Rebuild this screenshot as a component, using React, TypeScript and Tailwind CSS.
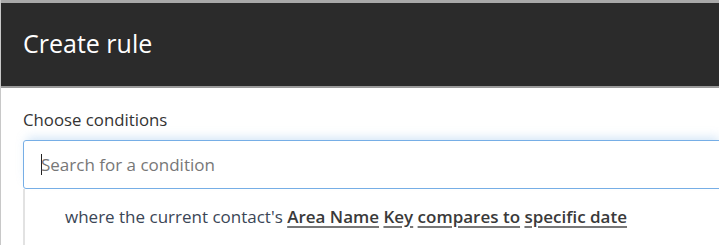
export default function App() {
  const link = 'font-semibold text-[#3a3a3a] underline decoration-[#777] decoration-[1.5px] underline-offset-[3px]';
  return (
    <div
      className="h-[245px] w-[719px] overflow-hidden bg-white border-l border-[#c8c8c8]"
      style={{ fontFamily: '"Open Sans", "Noto Sans", sans-serif' }}
    >
      <div className="h-[3px] bg-[#a9a9a9]" />
      <header className="h-[85px] bg-[#2b2b2b] border-b-[2px] border-[#9a9a9a] flex items-center pl-[22px]">
        <h1 className="text-[25px] text-white leading-none -mt-[2px]">Create rule</h1>
      </header>
      <div className="pl-[22px] pt-[21px]">
        <label className="block text-[16.8px] text-[#333] leading-[22px]">Choose conditions</label>
        <div className="mt-[9px] -mr-[4px] rounded-[3px] border border-[#76aee6] shadow-[0_-6px_10px_-4px_rgba(118,174,230,0.35)] h-[49px] flex items-center pl-[17px]">
          <span className="w-px h-[21px] bg-[#222]" />
          <span className="text-[17px] text-[#777] -ml-px">Search for a condition</span>
        </div>
        <div className="border-l-[2px] border-[#e2e2e2] h-[60px] pl-[40px] pt-[17px]">
          <p className="text-[17px] text-[#3b4656] leading-[22px] whitespace-nowrap">
            where the current contact's <span className={link}>Area Name</span>{' '}
            <span className={link}>Key</span> <span className={link}>compares to</span>{' '}
            <span className={link}>specific date</span>
          </p>
        </div>
      </div>
    </div>
  );
}
